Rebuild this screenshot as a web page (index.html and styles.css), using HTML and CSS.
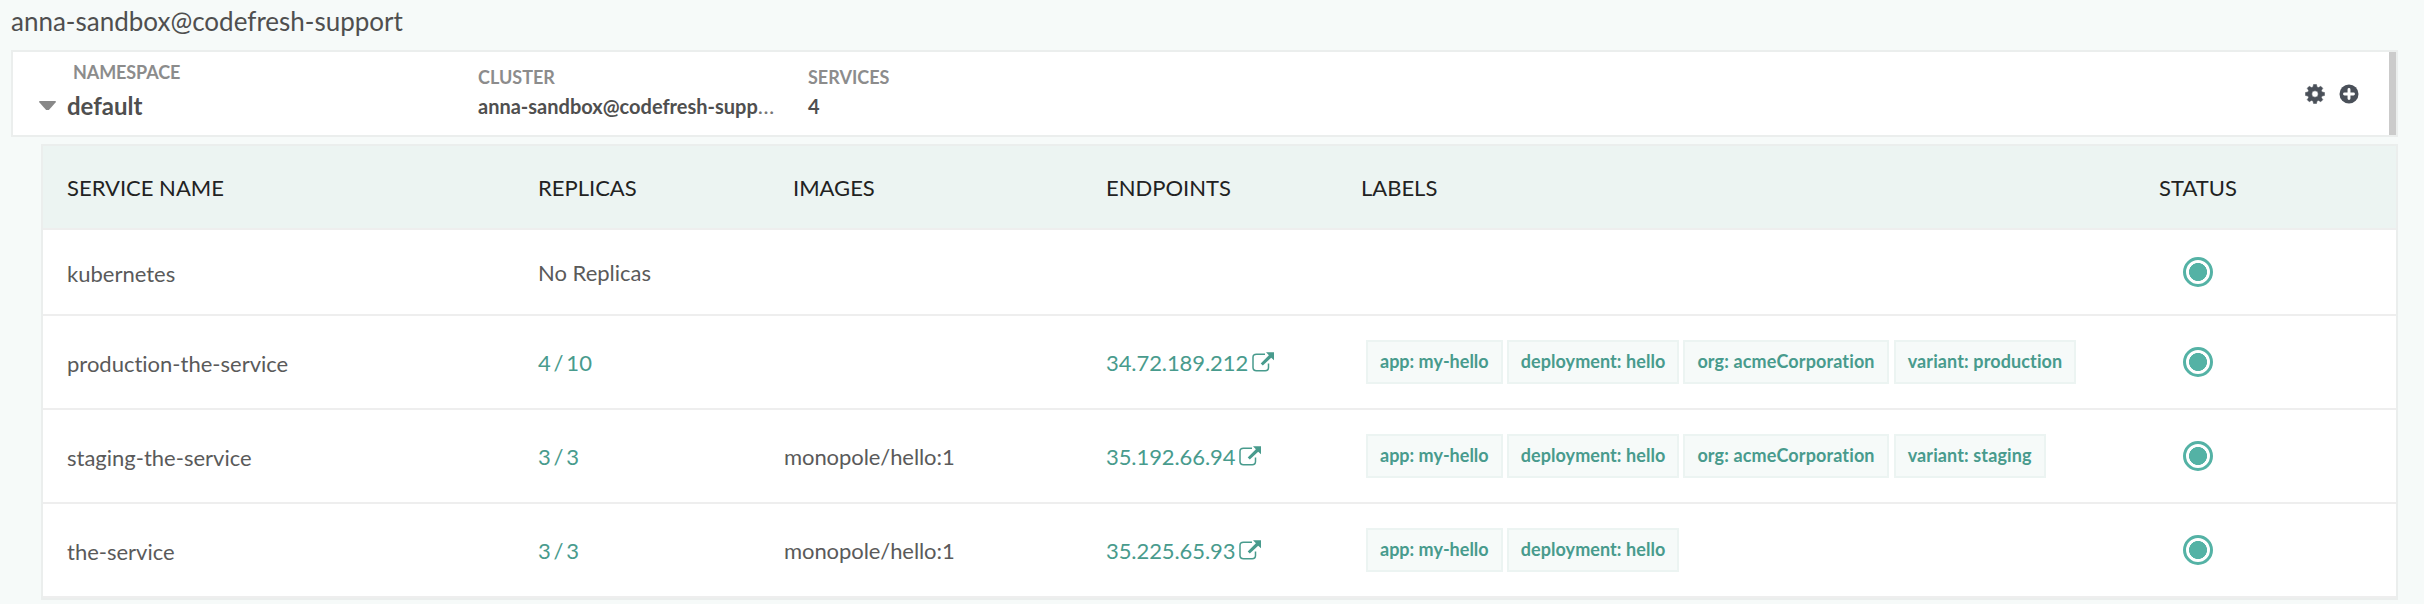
FILE: index.html
```html
<!DOCTYPE html>
<html lang="en">
<head>
<meta charset="utf-8">
<title>Kubernetes services</title>
<link rel="stylesheet" href="styles.css">
</head>
<body>
<svg class="sprite" aria-hidden="true">
  <symbol id="ext" viewBox="0 0 22 20">
    <path d="M13 2.2H4.500Q1 2.200 1 5.200V15.500Q1 18.700 4.500 18.700H13.200Q16.500 18.700 16.500 15.500V11.500" fill="none" stroke="currentColor" stroke-width="1.500"/>
    <path d="M14 .3H22V8.300L19.200 5.700L10.800 13.600L8.700 11.500L16.900 3.200Z" fill="currentColor"/>
  </symbol>
</svg>
<h1 class="title">anna-sandbox@codefresh-support</h1>
<section class="panel">
  <div class="namespace">
    <span class="caret"></span>
    <div class="ns-text">
      <div class="caption">NAMESPACE</div>
      <div class="ns-name">default</div>
    </div>
  </div>
  <div class="cluster">
    <div class="caption">CLUSTER</div>
    <div class="value"><b>anna-sandbox@codefresh-supp</b>…</div>
  </div>
  <div class="services">
    <div class="caption">SERVICES</div>
    <div class="value"><b>4</b></div>
  </div>
  <div class="actions">
    <svg width="20" height="20" viewBox="-10 -10 20 20" fill="#4a5059">
      <path fill-rule="evenodd" d="M-1.500 -9.500H1.500L2 -7L3.600 -6.400L5.700 -7.800L7.800 -5.700L6.400 -3.600L7 -2L9.500 -1.500V1.500L7 2L6.400 3.600L7.800 5.700L5.700 7.800L3.600 6.400L2 7L1.500 9.500H-1.500L-2 7L-3.600 6.400L-5.700 7.800L-7.800 5.700L-6.400 3.600L-7 2L-9.500 1.500V-1.500L-7 -2L-6.400 -3.600L-7.800 -5.700L-5.700 -7.800L-3.600 -6.400L-2 -7ZM0 -3.200A3.200 3.200 0 1 0 0 3.200A3.200 3.200 0 1 0 0 -3.200Z" stroke="#4a5059" stroke-width=".5" stroke-linejoin="round"/>
    </svg>
    <svg width="20" height="20" viewBox="-10 -10 20 20">
      <circle r="9.500" fill="#4a5059"/>
      <path d="M-4.500 0H4.500M0 -4.500V4.500" stroke="#fff" stroke-width="2.900" stroke-linecap="round"/>
    </svg>
  </div>
  <div class="bar"></div>
</section>
<section class="table">
  <div class="row head">
    <div>SERVICE NAME</div><div>REPLICAS</div><div class="head-images">IMAGES</div><div>ENDPOINTS</div><div>LABELS</div><div class="status">STATUS</div>
  </div>
  <div class="row first">
    <div class="name">kubernetes</div><div>No Replicas</div><div></div><div></div><div></div><div class="status"><i class="dot"></i></div>
  </div>
  <div class="row">
    <div class="name">production-the-service</div><div class="link replicas">4 / 10</div><div></div>
    <div class="link endpoint">34.72.189.212<svg class="ext"><use href="#ext"/></svg></div>
    <div class="tags"><span>app: my-hello</span><span>deployment: hello</span><span>org: acmeCorporation</span><span>variant: production</span></div>
    <div class="status"><i class="dot"></i></div>
  </div>
  <div class="row">
    <div class="name">staging-the-service</div><div class="link replicas">3 / 3</div><div class="image">monopole/hello:1</div>
    <div class="link endpoint">35.192.66.94<svg class="ext"><use href="#ext"/></svg></div>
    <div class="tags"><span>app: my-hello</span><span>deployment: hello</span><span>org: acmeCorporation</span><span>variant: staging</span></div>
    <div class="status"><i class="dot"></i></div>
  </div>
  <div class="row">
    <div class="name">the-service</div><div class="link replicas">3 / 3</div><div class="image">monopole/hello:1</div>
    <div class="link endpoint">35.225.65.93<svg class="ext"><use href="#ext"/></svg></div>
    <div class="tags"><span>app: my-hello</span><span>deployment: hello</span></div>
    <div class="status"><i class="dot"></i></div>
  </div>
</section>
</body>
</html>
```
FILE: styles.css
```css
* { box-sizing: border-box; }
body {
  margin: 0;
  padding: 6px 26px 4px 11px;
  height: 604px;
  overflow: hidden;
  background: #f6faf9;
  color: #5a5a5a;
  font: 22px/28px Lato, sans-serif;
  font-variant-ligatures: none;
  white-space: nowrap;
}
.sprite { display: none; }
.title {
  margin: 0 0 14px;
  font-size: 26px;
  line-height: 30px;
  font-weight: 400;
  color: #4f4f4f;
}
.panel {
  display: flex;
  height: 87px;
  border: 2px solid #ebeeed;
  background: #fff;
}
.namespace { display: flex; width: 465px; padding-left: 26px; }
.caret {
  width: 17px;
  height: 9px;
  margin: 49px 11px 0 0;
  background: #888;
  clip-path: polygon(3% 0, 97% 0, 100% 12%, 58% 100%, 42% 100%, 0 12%);
}
.caption { font-size: 18px; line-height: 24px; font-weight: 700; color: #8c8c8c; }
.ns-text .caption { padding: 8px 0 0 6px; letter-spacing: -.1px; }
.ns-name { font-size: 24px; line-height: 30px; font-weight: 700; color: #4f4f4f; padding-top: 7px; }
.cluster { width: 330px; padding-top: 13px; }
.services { flex: 1; padding-top: 13px; }
.value { font-size: 22px; line-height: 24px; height: 24px; margin-top: 5px; color: #777; }
.value b { font-size: 20px; color: #4f4f4f; font-weight: 700; }
.actions { display: flex; align-items: center; gap: 14px; margin-right: 30px; }
.actions svg { display: block; }
.bar { width: 7px; background: #cbcbcb; }
.table {
  margin: 7px 0 0 30px;
  border: 2px solid #ebeeed;
  background: #fff;
}
.row {
  display: grid;
  grid-template-columns: 471px 246px 322px 255px 759px 1fr;
  align-items: center;
  height: 94px;
  padding-left: 24px;
  border-bottom: 2px solid #eee;
}
.row > div { padding-top: 2px; }
.row.first { height: 86px; }
.head { height: 84px; background: #ecf4f2; color: #222; }
.row > .head-images { padding-left: 9px; }
.row > .name { padding-top: 4px; }
.link { color: #489b8d; }
.replicas { word-spacing: -2.8px; }
.image { letter-spacing: -.08px; }
.endpoint { display: flex; align-items: center; letter-spacing: -.08px; }
.ext { width: 22px; height: 20px; margin: 0 0 2px 4px; }
.row > .tags { display: flex; gap: 4px; padding: 0 0 0 5px; }
.tags span {
  height: 44px;
  padding: 6px 12px;
  border: 2px solid #ecf4f2;
  background: #f6faf9;
  color: #489b8d;
  font-size: 18px;
  line-height: 26px;
  font-weight: 700;
}
.tags span:nth-child(2) { letter-spacing: .07px; }
.tags span:nth-child(3) { letter-spacing: .13px; }
.tags span:nth-child(4) { margin-left: 1px; letter-spacing: .12px; }
.status { width: 156px; text-align: center; }
.row:not(.head) > .status { padding-top: 0; }
.dot {
  display: block;
  width: 30px;
  height: 30px;
  margin: 0 auto;
  border: 3px solid #54b2a5;
  border-radius: 50%;
  background: radial-gradient(circle, #54b2a5 8.700px, #fff 9.300px);
}
```
